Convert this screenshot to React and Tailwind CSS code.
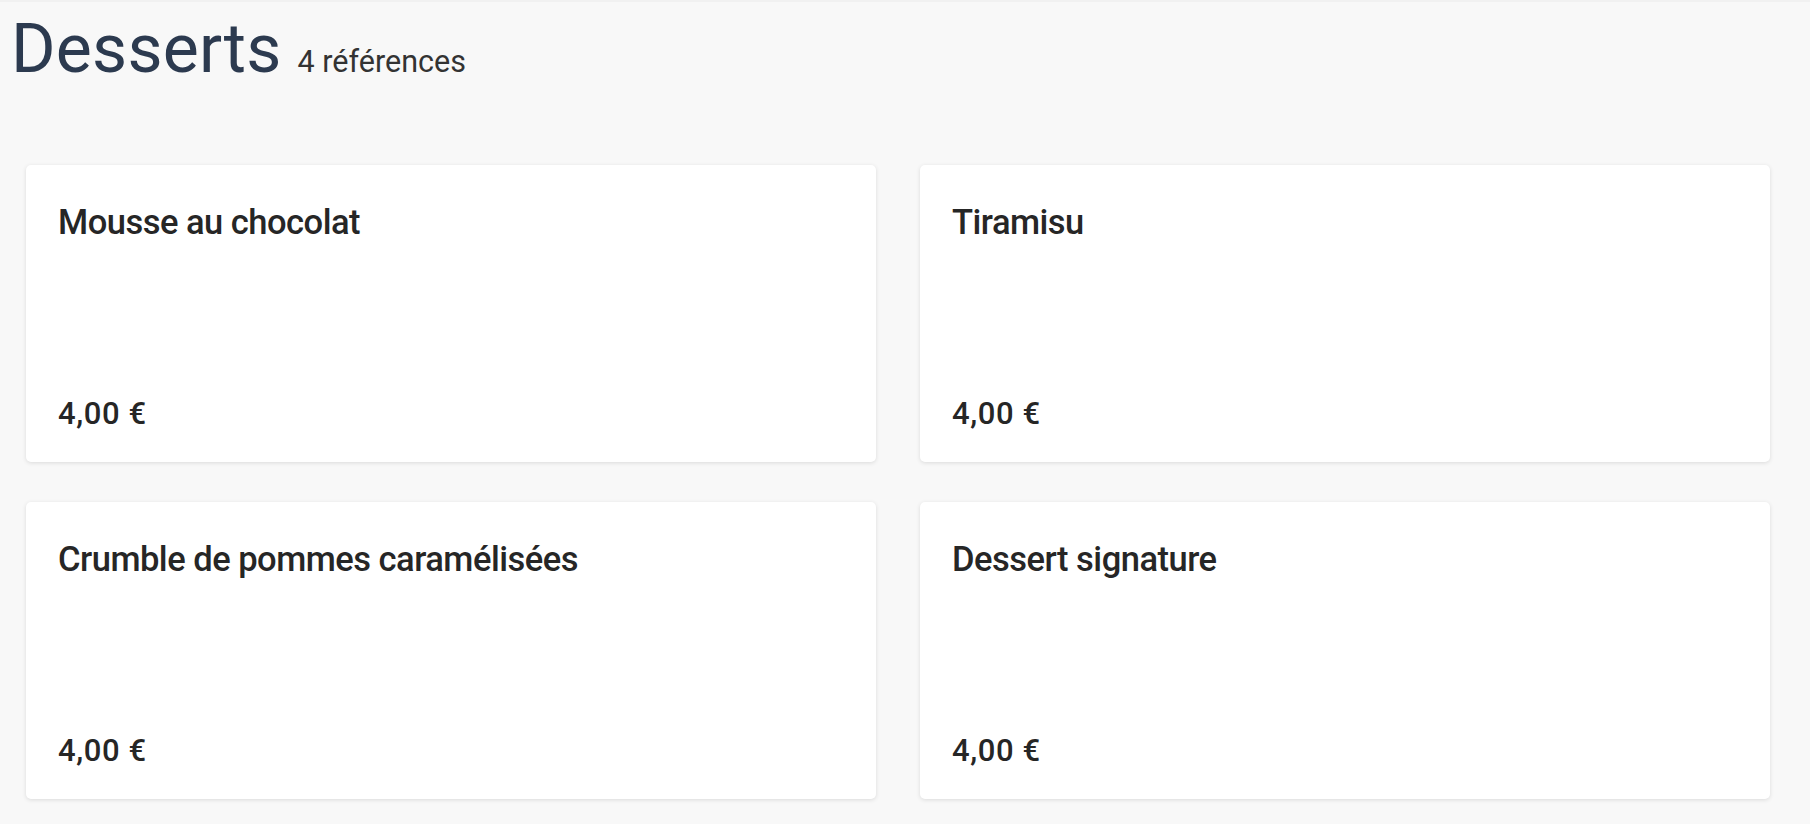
import React from "react";

const items = [
  { name: "Mousse au chocolat", price: "4,00 €" },
  { name: "Tiramisu", price: "4,00 €" },
  { name: "Crumble de pommes caramélisées", price: "4,00 €" },
  { name: "Dessert signature", price: "4,00 €" },
];

function Card({ name, price }) {
  return (
    <div className="h-[297px] rounded-[5px] bg-white shadow-[0_1px_4px_rgba(0,0,0,0.12)] flex flex-col justify-between px-[32px] pt-[40px] pb-[33px]">
      <div className="text-[34.5px] leading-none font-medium tracking-[-0.5px] text-[#262626]">{name}</div>
      <div className="text-[31px] leading-none font-medium tracking-[0.6px] text-[#262626]">{price}</div>
    </div>
  );
}

export default function App() {
  return (
    <div
      className="min-h-screen bg-[#f8f8f8] border-t-2 border-[#f1f1f1]"
      style={{ fontFamily: "Roboto, 'Liberation Sans', sans-serif" }}
    >
      <div className="flex items-baseline gap-[16px] pl-[11px] pt-[13px]">
        <h1 className="text-[68px] leading-none font-normal tracking-[0.2px] text-[#2c3a4f]">Desserts</h1>
        <span className="text-[30.5px] leading-none font-normal text-[#333333]">4 références</span>
      </div>
      <div className="grid grid-cols-2 gap-x-[44px] gap-y-[40px] pl-[26px] pr-[40px] mt-[82px]">
        {items.map((it) => (
          <Card key={it.name} {...it} />
        ))}
      </div>
    </div>
  );
}
